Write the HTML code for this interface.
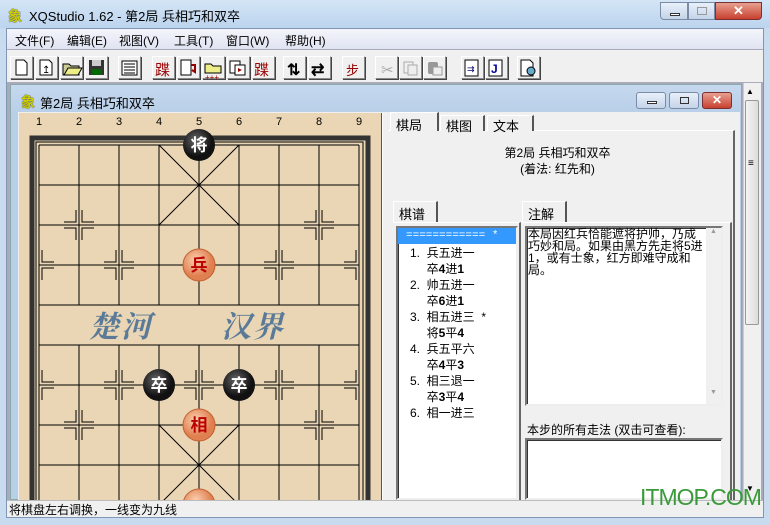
<!DOCTYPE html>
<html><head><meta charset="utf-8"><style>
*{margin:0;padding:0;box-sizing:border-box}
body{width:770px;height:525px;overflow:hidden;background:#c9dcef;font-family:"Liberation Sans","Noto Sans CJK SC",sans-serif;font-size:12px;color:#000;position:relative}
.a{position:absolute}
.tb{position:absolute;top:56px;width:23px;height:23px;background:#f0f0f0;border:1px solid;border-color:#fff #888 #888 #fff;box-shadow:1px 1px 0 #444}
.tab{position:absolute;background:#f0f0f0;border:1px solid #fff;border-right:2px solid #555;border-bottom:none;font-size:13px;padding:2px 0 0 5px}
.box{position:absolute;background:#fff;border:2px solid;border-color:#777 #eee #eee #777;box-shadow:inset 1px 1px 0 #333}
</style></head><body>
<div class="a" style="left:0;top:0;width:770px;height:28px;background:linear-gradient(#d4e5f6,#bcd4ee)"></div>
<div class="a" style="left:8px;top:6px;color:#cc0;font-size:14px;font-weight:bold;text-shadow:0 0 1px #000">象</div>
<div class="a" style="left:29px;top:6px;font-size:13px">XQStudio 1.62 - 第2局 兵相巧和双卒</div>
<div class="a" style="left:660px;top:2px;width:28px;height:18px;border:1px solid #7a8ba5;border-radius:0 0 0 4px;background:linear-gradient(#e8f0fa,#c4d4e8)"><div class="a" style="left:9px;top:10px;width:10px;height:3px;background:#fff;border:1px solid #333"></div></div>
<div class="a" style="left:688px;top:2px;width:27px;height:18px;border:1px solid #7a8ba5;background:linear-gradient(#e8f0fa,#c4d4e8)"><div class="a" style="left:8px;top:4px;width:10px;height:8px;border:1px solid #999"></div></div>
<div class="a" style="left:715px;top:2px;width:47px;height:18px;border:1px solid #7a3030;border-radius:0 0 4px 0;background:linear-gradient(#e8a090,#c84030);color:#fff;font-weight:bold;text-align:center;font-size:13px;line-height:16px">✕</div>
<div class="a" style="left:6px;top:28px;width:758px;height:490px;background:#f0f0f0;border:1px solid #8096b4"></div>
<div class="a" style="left:7px;top:29px;width:756px;height:21px;background:linear-gradient(#f4f5fb,#e0e4f2);border-bottom:1px solid #aab"></div>
<div class="a" style="left:15px;top:32px">文件(F)</div>
<div class="a" style="left:67px;top:32px">编辑(E)</div>
<div class="a" style="left:119px;top:32px">视图(V)</div>
<div class="a" style="left:174px;top:32px">工具(T)</div>
<div class="a" style="left:226px;top:32px">窗口(W)</div>
<div class="a" style="left:285px;top:32px">帮助(H)</div>
<div class="tb" style="left:10px"></div><div class="tb" style="left:35px"></div><div class="tb" style="left:60px"></div><div class="tb" style="left:85px"></div>
<div class="tb" style="left:118px"></div>
<div class="tb" style="left:152px"></div><div class="tb" style="left:177px"></div><div class="tb" style="left:202px"></div><div class="tb" style="left:227px"></div><div class="tb" style="left:252px"></div>
<div class="tb" style="left:283px"></div><div class="tb" style="left:308px"></div>
<div class="tb" style="left:342px"></div>
<div class="tb" style="left:375px"></div><div class="tb" style="left:399px"></div><div class="tb" style="left:423px"></div>
<div class="tb" style="left:461px"></div><div class="tb" style="left:485px"></div>
<div class="tb" style="left:517px"></div>
<svg class="a" style="left:0;top:50px" width="560" height="35" font-family="Liberation Sans">
<path d="M16 10h8l3 3v12h-11z" fill="#fff" stroke="#000"/>
<path d="M40 10h9l3 3v12h-12z" fill="#fff" stroke="#000"/><text x="42" y="23" font-size="10">↥</text>
<path d="M63 14h6l2 2h8v9h-16z" fill="#cc9" stroke="#000"/><path d="M64 25l4-7h14l-4 7z" fill="#ee8" stroke="#000"/>
<rect x="89" y="10" width="15" height="15" fill="#333"/><rect x="92" y="10" width="9" height="6" fill="#ccc"/><rect x="91" y="19" width="11" height="6" fill="#060"/>
<g stroke="#000"><rect x="122" y="11" width="15" height="14" fill="#fff"/><path d="M124 14h11M124 17h11M124 20h11M124 23h11"/></g>
<text x="155" y="25" font-size="15" fill="#900" font-family="Noto Sans CJK SC">蹀</text>
<rect x="181" y="10" width="10" height="15" fill="#fff" stroke="#000"/><path d="M191 15h4v7l-3-2" stroke="#900" fill="none" stroke-width="2"/>
<path d="M205 14h6l2 2h8v7h-16z" fill="#ee8" stroke="#000"/><text x="205" y="30" font-size="8" fill="#900">+++</text>
<rect x="230" y="11" width="10" height="12" fill="#fff" stroke="#000"/><rect x="235" y="15" width="10" height="10" fill="#fff" stroke="#000"/><path d="M238 18l4 2-4 2z" fill="#900"/>
<text x="254" y="25" font-size="15" fill="#900" font-family="Noto Sans CJK SC">蹀</text>
<text x="287" y="25" font-size="16" font-weight="bold">⇅</text>
<text x="311" y="25" font-size="16" font-weight="bold">⇄</text>
<text x="346" y="25" font-size="13" fill="#900" font-family="Noto Sans CJK SC">步</text>
<text x="381" y="25" font-size="15" fill="#aaa">✂</text>
<rect x="404" y="12" width="9" height="11" fill="none" stroke="#aaa"/><rect x="408" y="15" width="9" height="10" fill="#eee" stroke="#aaa"/>
<rect x="428" y="12" width="10" height="12" fill="#999" rx="2"/><rect x="433" y="17" width="9" height="8" fill="#eee" stroke="#999"/>
<rect x="465" y="10" width="13" height="16" fill="#fff" stroke="#000"/><text x="467" y="22" font-size="9" fill="#006">⇉</text>
<rect x="489" y="10" width="13" height="16" fill="#fff" stroke="#000"/><text x="491" y="23" font-size="12" fill="#009" font-weight="bold">J</text>
<path d="M521 10h9l3 3v13h-12z" fill="#fff" stroke="#000"/><circle cx="531" cy="21" r="4" fill="#6ac" stroke="#000"/>
</svg>
<div class="a" style="left:7px;top:82px;width:756px;height:418px;background:#aab"></div>
<div class="a" style="left:743px;top:83px;width:18px;height:417px;background:#f0f0f0;border-left:1px solid #ccc"></div>
<div class="a" style="left:746px;top:87px;font-size:8px">▲</div>
<div class="a" style="left:746px;top:484px;font-size:8px">▼</div>
<div class="a" style="left:745px;top:100px;width:14px;height:225px;background:linear-gradient(90deg,#f4f4f4,#dcdcdc);border:1px solid #999;border-radius:2px"></div>
<div class="a" style="left:748px;top:158px;font-size:10px">≡</div>
<div class="a" style="left:10px;top:84px;width:732px;height:416px;background:linear-gradient(#c5d8ee,#b8cfe8 30px,#b8cfe8);border:1px solid #8aa"></div>
<div class="a" style="left:21px;top:92px;color:#cc0;font-size:14px;font-weight:bold;text-shadow:0 0 1px #000">象</div>
<div class="a" style="left:40px;top:93px;font-size:13px">第2局 兵相巧和双卒</div>
<div class="a" style="left:636px;top:92px;width:30px;height:17px;border:1px solid #7a8ba5;border-radius:3px;background:linear-gradient(#e8f0fa,#c4d4e8)"><div class="a" style="left:10px;top:8px;width:10px;height:3px;background:#fff;border:1px solid #333"></div></div>
<div class="a" style="left:669px;top:92px;width:30px;height:17px;border:1px solid #7a8ba5;border-radius:3px;background:linear-gradient(#e8f0fa,#c4d4e8)"><div class="a" style="left:10px;top:4px;width:9px;height:7px;border:1px solid #333"></div></div>
<div class="a" style="left:702px;top:92px;width:30px;height:17px;border:1px solid #7a3030;border-radius:3px;background:linear-gradient(#e8a090,#c84030);color:#fff;font-weight:bold;text-align:center;font-size:12px;line-height:15px">✕</div>
<div class="a" style="left:18px;top:112px;width:722px;height:388px;background:#f0f0f0"></div>
<svg class="a" style="left:19px;top:113px" width="362" height="387" font-family="Liberation Sans,Noto Sans CJK SC">
<defs><radialGradient id="bk" cx="40%" cy="35%"><stop offset="0" stop-color="#666"/><stop offset="1" stop-color="#111"/></radialGradient>
<radialGradient id="rd" cx="40%" cy="35%"><stop offset="0" stop-color="#fbd0b0"/><stop offset="1" stop-color="#e08050"/></radialGradient></defs>
<rect width="362" height="387" fill="#ead6b4"/>
<g font-size="11" text-anchor="middle"><text x="20" y="12">1</text><text x="60" y="12">2</text><text x="100" y="12">3</text><text x="140" y="12">4</text><text x="180" y="12">5</text><text x="220" y="12">6</text><text x="260" y="12">7</text><text x="300" y="12">8</text><text x="340" y="12">9</text></g>
<rect x="13" y="25" width="336" height="380" fill="none" stroke="#333" stroke-width="5"/>
<rect x="17" y="29" width="327" height="370" fill="none" stroke="#000" stroke-width="1"/>
<g stroke="#000" stroke-width="1" fill="none">
<path d="M20 32v355M340 32v355M20 32h320M20 72h320M20 112h320M20 152h320M20 192h320M20 232h320M20 272h320M20 312h320M20 352h320"/>
<path d="M60 32v160M100 32v160M140 32v160M180 32v160M220 32v160M260 32v160M300 32v160"/>
<path d="M60 232v155M100 232v155M140 232v155M180 232v155M220 232v155M260 232v155M300 232v155"/>
<path d="M140 32l80 80M220 32l-80 80M140 312l80 80M220 312l-80 80"/>
<path id="marks" d=""/>
</g>
<text x="70" y="224" font-size="30" fill="#5b7a98" font-weight="bold" font-family="Noto Serif CJK SC,serif" letter-spacing="2" font-style="italic">楚河</text>
<text x="202" y="224" font-size="30" fill="#5b7a98" font-weight="bold" font-family="Noto Serif CJK SC,serif" letter-spacing="2" font-style="italic">汉界</text>
<g font-size="17" text-anchor="middle" font-weight="bold" font-family="Noto Sans CJK SC">
<circle cx="180" cy="32" r="16" fill="url(#bk)"/><text x="180" y="38" fill="#fff">将</text>
<circle cx="180" cy="152" r="16" fill="url(#rd)" stroke="#c06030"/><text x="180" y="158" fill="#b00">兵</text>
<circle cx="140" cy="272" r="16" fill="url(#bk)"/><text x="140" y="278" fill="#fff">卒</text>
<circle cx="220" cy="272" r="16" fill="url(#bk)"/><text x="220" y="278" fill="#fff">卒</text>
<circle cx="180" cy="312" r="16" fill="url(#rd)" stroke="#c06030"/><text x="180" y="318" fill="#b00">相</text>
<circle cx="180" cy="392" r="16" fill="url(#rd)" stroke="#c06030"/>
</g>
</svg>
<script>
(function(){var pts=[[60,112],[300,112],[60,312],[300,312],[20,152],[100,152],[180,152],[260,152],[340,152],[20,272],[100,272],[180,272],[260,272],[340,272]];var d="";
pts.forEach(function(p){var x=p[0],y=p[1];var sx=[];if(x>20)sx.push(-1);if(x<340)sx.push(1);sx.forEach(function(s){[-1,1].forEach(function(t){d+="M"+(x+s*3)+" "+(y+t*15)+"V"+(y+t*3)+"H"+(x+s*15);});});});
document.getElementById("marks").setAttribute("d",d);})();
</script>
<div class="a" style="left:381px;top:113px;width:2px;height:387px;background:#fff;border-left:1px solid #555"></div>
<div class="a" style="left:388px;top:130px;width:347px;height:370px;border-top:1px solid #fff;border-right:2px solid #666"></div>
<div class="tab" style="left:390px;top:112px;width:49px;height:19px;z-index:2">棋局</div>
<div class="tab" style="left:440px;top:115px;width:45px;height:16px;padding-top:0">棋图</div>
<div class="tab" style="left:487px;top:115px;width:47px;height:16px;padding-top:0">文本</div>
<div class="a" style="left:380px;top:145px;width:355px;text-align:center;font-size:12px;line-height:16px">第2局 兵相巧和双卒<br>(着法: 红先和)</div>
<div class="tab" style="left:393px;top:201px;width:45px;height:22px">棋谱</div>
<div class="a" style="left:393px;top:222px;width:128px;height:278px;border-top:1px solid #fff;border-right:2px solid #666"></div>
<div class="tab" style="left:522px;top:201px;width:45px;height:22px">注解</div>
<div class="a" style="left:522px;top:222px;width:210px;height:278px;border-top:1px solid #fff;border-right:2px solid #666"></div>
<div class="box" style="left:396px;top:226px;width:122px;height:274px"></div>
<div class="a" style="left:398px;top:228px;width:118px;height:16px;background:#3399ff;color:#fff;font-family:'Liberation Mono',monospace;font-size:11px;padding-left:8px;line-height:16px">============ *</div>
<div class="a" style="left:410px;top:245px;font-size:12px;line-height:16px;white-space:pre">1.  兵五进一
     卒<b>4</b>进<b>1</b>
2.  帅五进一
     卒<b>6</b>进<b>1</b>
3.  相五进三  *
     将<b>5</b>平<b>4</b>
4.  兵五平六
     卒<b>4</b>平<b>3</b>
5.  相三退一
     卒<b>3</b>平<b>4</b>
6.  相一进三</div>
<div class="box" style="left:525px;top:226px;width:198px;height:180px"></div>
<div class="a" style="left:706px;top:228px;width:15px;height:176px;background:#f0f0f0;font-size:7px;color:#999;text-align:center">▲<div style="position:absolute;bottom:8px;width:15px">▼</div></div>
<div class="a" style="left:528px;top:228px;width:178px;font-size:12px;line-height:12px;word-break:break-all">本局因红兵恰能遮将护帅，乃成巧妙和局。如果由黑方先走将5进1，或有士象，红方即难守成和局。</div>
<div class="a" style="left:527px;top:421px;font-size:12px">本步的所有走法 (双击可查看):</div>
<div class="box" style="left:525px;top:438px;width:198px;height:62px"></div>
<div class="a" style="left:7px;top:500px;width:756px;height:17px;background:#f0f0f0;border-top:1px solid #bbb"></div>
<div class="a" style="left:9px;top:501px;font-size:12px">将棋盘左右调换，一线变为九线</div>
<div class="a" style="left:640px;top:484px;font-size:23px;color:#3a9a3a;letter-spacing:-1px">ITMOP.COM</div>
</body></html>
